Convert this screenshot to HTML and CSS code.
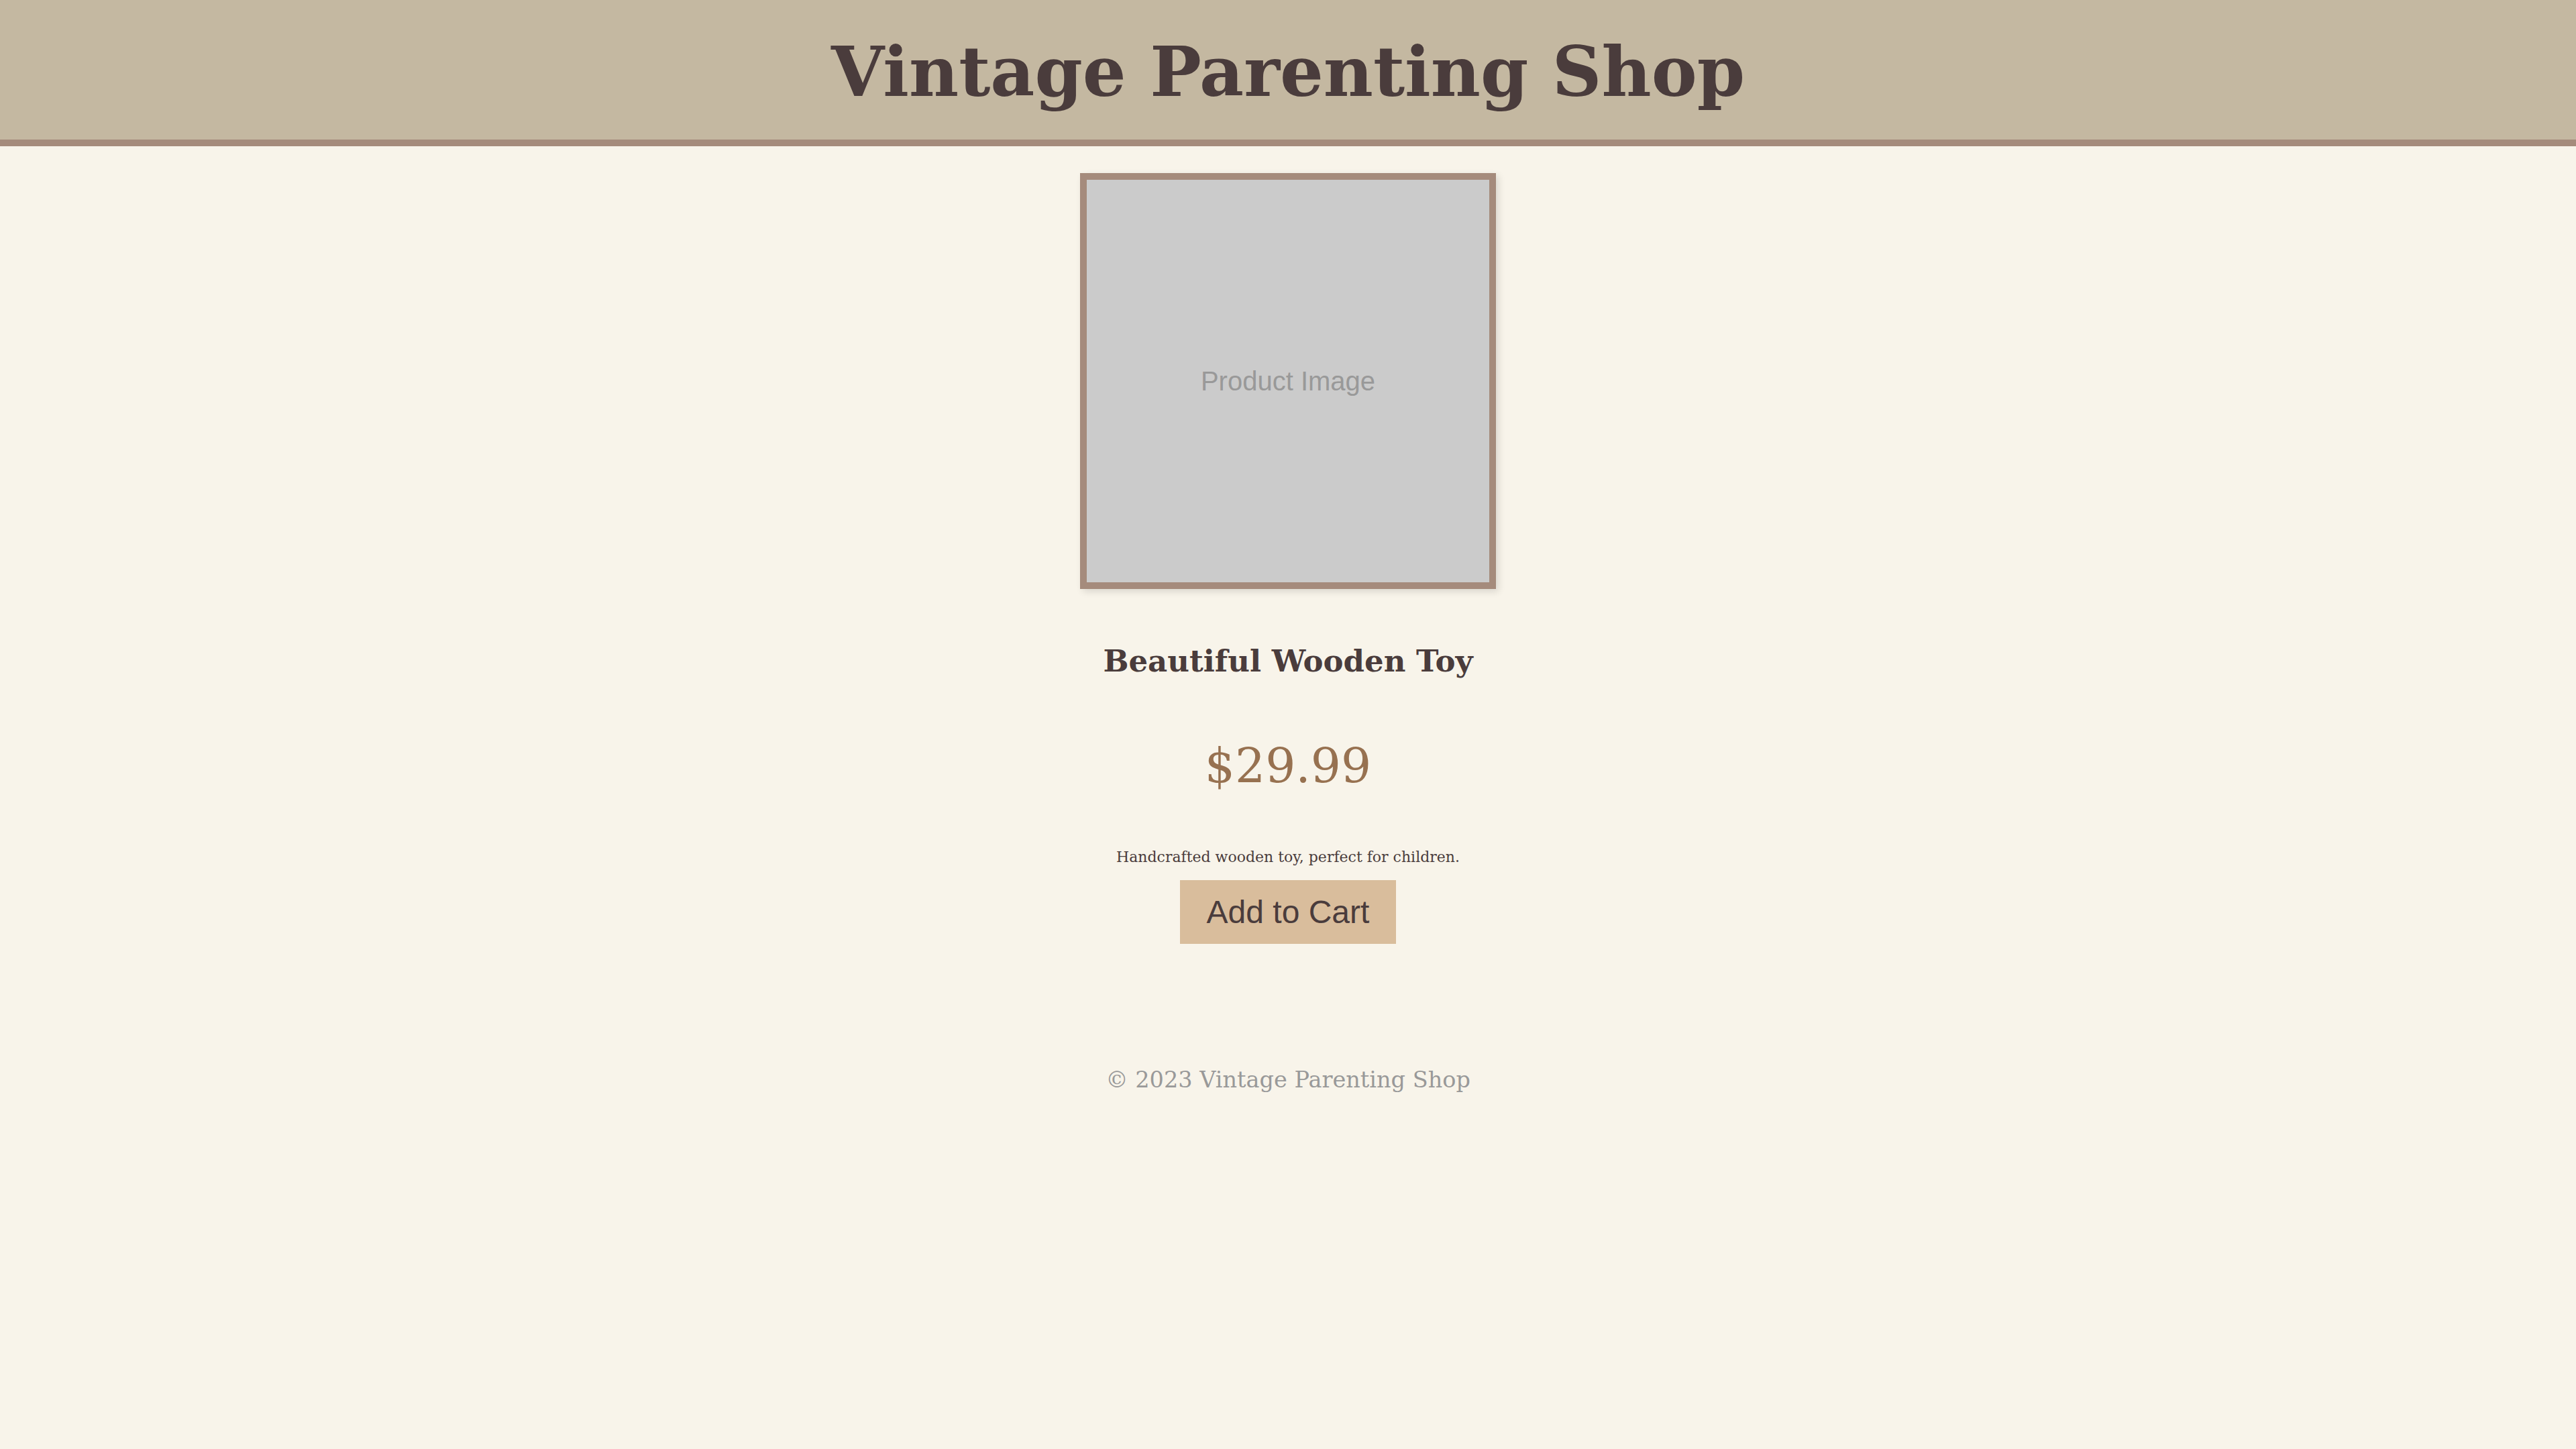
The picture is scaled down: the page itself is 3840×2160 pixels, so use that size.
FILE: index.html
```html
<!DOCTYPE html>
<html lang="en">
<head>
<meta charset="utf-8">
<title>Vintage Parenting Shop</title>
<link rel="stylesheet" href="styles.css">
</head>
<body>
<header class="site-header">
  <h1 class="site-title">Vintage Parenting Shop</h1>
</header>
<main class="product">
  <div class="product-image"><span class="product-image-label">Product Image</span></div>
  <h2 class="product-name">Beautiful Wooden Toy</h2>
  <p class="product-price">$29.99</p>
  <p class="product-desc">Handcrafted wooden toy, perfect for children.</p>
  <button class="add-to-cart" type="button">Add to Cart</button>
</main>
<footer class="site-footer">
  <p class="copyright">© 2023 Vintage Parenting Shop</p>
</footer>
</body>
</html>
```

FILE: styles.css
```css
html, body {
  margin: 0;
  padding: 0;
}

body {
  background: #f8f4ea;
  color: #4a3c3c;
  font-family: "DejaVu Serif", "Liberation Serif", serif;
  min-height: 2160px;
}

.site-header {
  background: #c4b8a1;
  border-bottom: 10px solid #a58b7c;
  padding: 46px 0 40px;
  text-align: center;
}

.site-title {
  margin: 0;
  font-size: 102px;
  line-height: 122px;
  font-weight: bold;
  color: #4a3c3c;
}

.product {
  display: flex;
  flex-direction: column;
  align-items: center;
  text-align: center;
}

.product-image {
  box-sizing: border-box;
  width: 620px;
  height: 620px;
  margin-top: 40px;
  border: 10px solid #a58b7c;
  background: #cbcbcb;
  box-shadow: 4px 4px 10px rgba(0, 0, 0, 0.12);
  display: flex;
  align-items: center;
  justify-content: center;
}

.product-image-label {
  font-family: "Liberation Sans", Arial, sans-serif;
  font-size: 40px;
  color: #999999;
}

.product-name {
  margin: 81px 0 0;
  font-size: 45px;
  line-height: 54px;
  font-weight: bold;
}

.product-price {
  margin: 86px 0 0;
  font-size: 71px;
  line-height: 85px;
  color: #977150;
}

.product-desc {
  margin: 81px 0 0;
  font-size: 22px;
  line-height: 26px;
}

.add-to-cart {
  margin-top: 21px;
  padding: 20px 40px;
  border: none;
  background: #d9bd9c;
  color: #4a3c3c;
  font-family: "Liberation Sans", Arial, sans-serif;
  font-size: 48px;
  line-height: 55px;
}

.site-footer {
  text-align: center;
  padding-top: 183px;
}

.copyright {
  margin: 0;
  font-size: 33.5px;
  line-height: 40px;
  color: #999999;
}
```
